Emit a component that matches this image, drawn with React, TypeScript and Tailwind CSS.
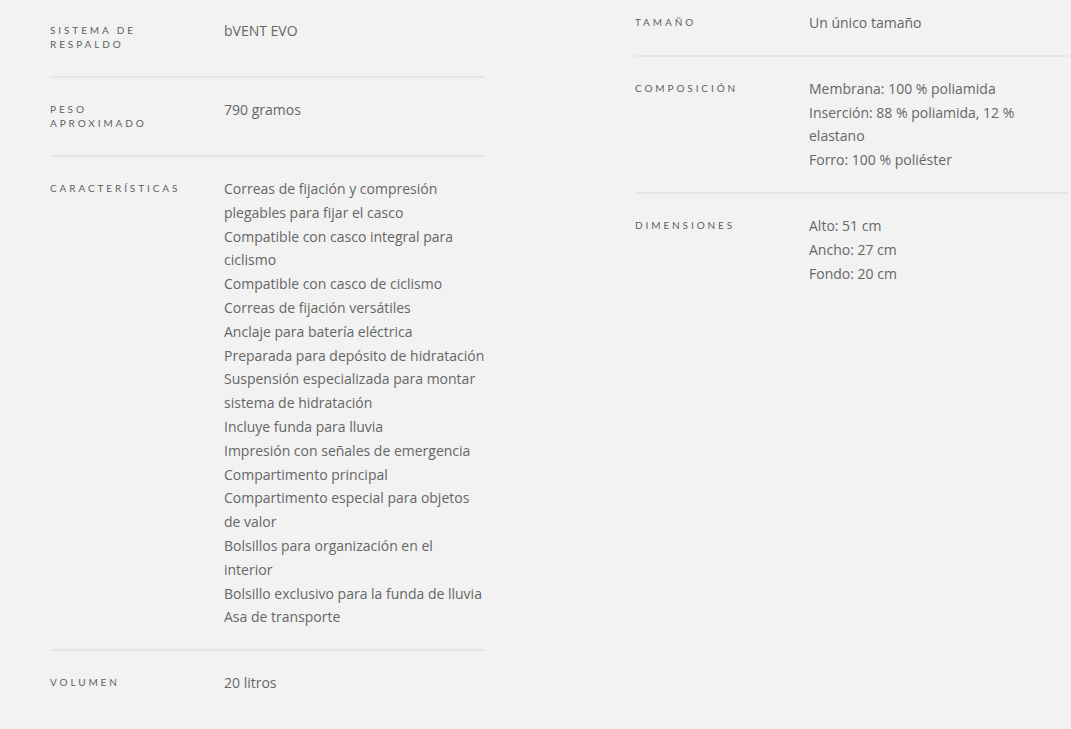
import React from "react";

type Row = { label: string[]; value: string[][] };

const left: Row[] = [
  { label: ["Sistema de", "respaldo"], value: [["bVENT EVO"]] },
  { label: ["Peso", "aproximado"], value: [["790 gramos"]] },
  {
    label: ["Características"],
    value: [
      ["Correas de fijación y compresión", "plegables para fijar el casco"],
      ["Compatible con casco integral para", "ciclismo"],
      ["Compatible con casco de ciclismo"],
      ["Correas de fijación versátiles"],
      ["Anclaje para batería eléctrica"],
      ["Preparada para depósito de hidratación"],
      ["Suspensión especializada para montar", "sistema de hidratación"],
      ["Incluye funda para lluvia"],
      ["Impresión con señales de emergencia"],
      ["Compartimento principal"],
      ["Compartimento especial para objetos", "de valor"],
      ["Bolsillos para organización en el", "interior"],
      ["Bolsillo exclusivo para la funda de lluvia"],
      ["Asa de transporte"],
    ],
  },
  { label: ["Volumen"], value: [["20 litros"]] },
];

const right: Row[] = [
  { label: ["Tamaño"], value: [["Un único tamaño"]] },
  {
    label: ["Composición"],
    value: [
      ["Membrana: 100 % poliamida"],
      ["Inserción: 88 % poliamida, 12 %", "elastano"],
      ["Forro: 100 % poliéster"],
    ],
  },
  {
    label: ["Dimensiones"],
    value: [["Alto: 51 cm"], ["Ancho: 27 cm"], ["Fondo: 20 cm"]],
  },
];

function SpecRow({ row, first, last }: { row: Row; first: boolean; last: boolean }) {
  return (
    <div
      className={
        "flex pb-[20px] " +
        (first ? "" : "pt-[20px] ") +
        (last ? "" : "border-b-2 border-[#e6e6e6]")
      }
    >
      <div className="w-[174px] shrink-0 pt-[4px] pb-[5px] text-[10px] leading-[14px] tracking-[2.9px] uppercase text-[#5f5f5f] font-['Lato',sans-serif]">
        {row.label.map((l, i) => (
          <div key={i}>{l}</div>
        ))}
      </div>
      <div className="flex-1 text-[14px] leading-[1.7] text-[#666666] font-['Open_Sans',sans-serif]">
        {row.value.map((item, i) => (
          <div key={i}>
            {item.map((line, j) => (
              <div key={j} className="whitespace-nowrap">
                {line}
              </div>
            ))}
          </div>
        ))}
      </div>
    </div>
  );
}

export default function App() {
  return (
    <div className="min-h-[729px] w-full bg-[#f2f2f2] flex pl-[50px]">
      <div className="w-[435px] pt-[19px]">
        {left.map((r, i) => (
          <SpecRow key={i} row={r} first={i === 0} last={i === left.length - 1} />
        ))}
      </div>
      <div className="w-[434px] ml-[150px] pt-[11px]">
        {right.map((r, i) => (
          <SpecRow key={i} row={r} first={i === 0} last={i === right.length - 1} />
        ))}
      </div>
    </div>
  );
}
